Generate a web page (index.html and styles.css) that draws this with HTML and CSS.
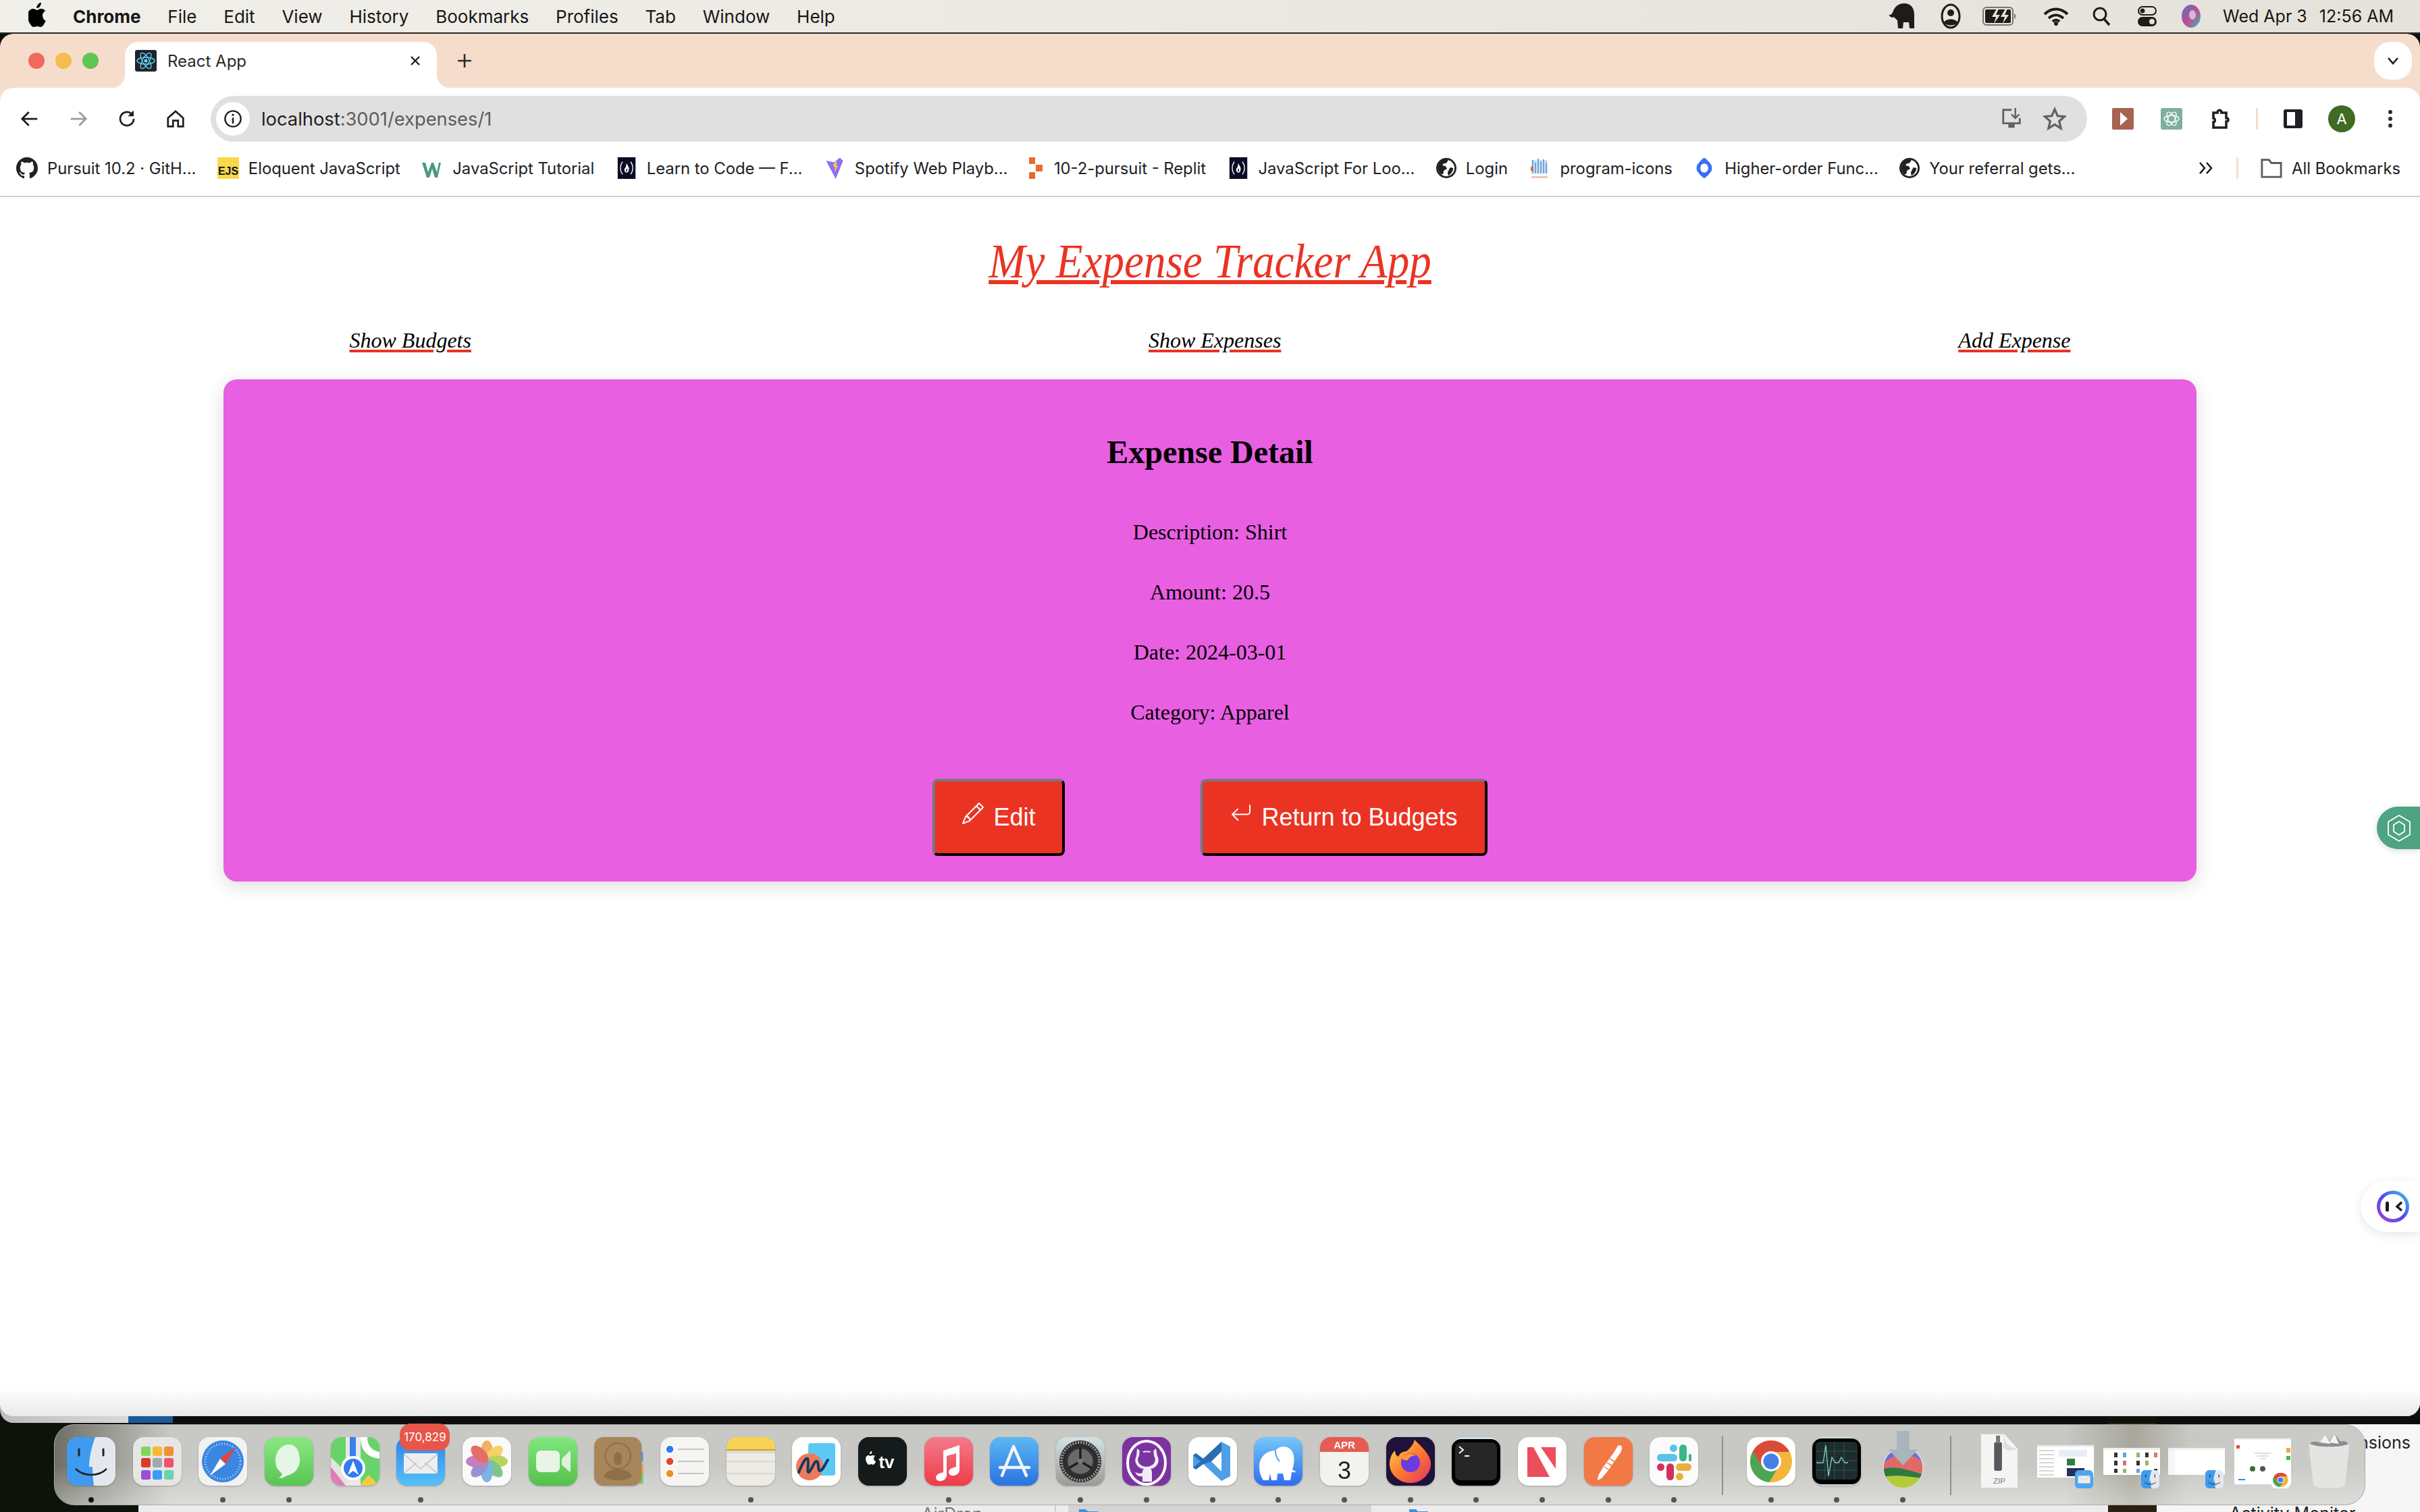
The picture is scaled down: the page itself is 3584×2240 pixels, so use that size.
FILE: index.html
```html
<!DOCTYPE html>
<html lang="en">
<head>
<meta charset="utf-8">
<title>React App</title>
<link rel="stylesheet" href="styles.css">
</head>
<body>
<svg class="defs" width="0" height="0">
  <symbol id="globe" viewBox="0 0 32 32"><circle cx="16" cy="16" r="14.5" fill="#fff" stroke="#202124" stroke-width="3"/><path d="M16 2c-7 0-13 6-13 14 0 4 2 8 5 10l3-1 1-5 5-3-2-4-5-1 1-3 5-1 3-4zM22 15l5 1c0 4-3 9-8 12l-1-5z" fill="#202124"/></symbol>
  <symbol id="fw" viewBox="0 0 32 38"><rect width="32" height="38" fill="#0b0b26"/><path d="M9 8c-5 6-5 16 0 22M23 8c5 6 5 16 0 22" fill="none" stroke="#fff" stroke-width="1.6"/><path d="M16 10c1 4 5 7 4 12 0 3-2 5-4 5s-4-2-4-5c0-3 3-4 3-7l1-5z" fill="#fff"/><path d="M16 19c1 2 2 3 1 5s-2 1-2 0 1-3 1-5z" fill="#0b0b26"/></symbol>
  <symbol id="finder" viewBox="0 0 72 72"><rect width="72" height="72" rx="16" fill="#e4e8ee"/><path d="M16 0h26c-6 16-9 32-9 44h5c0 10 1 20 2 28H16C7 72 0 65 0 56V16C0 7 7 0 16 0z" fill="#3f9bf0"/><path d="M18 18v9M54 18v9" stroke="#222" stroke-width="3" stroke-linecap="round"/><path d="M13 47c12 12 34 12 46 0" fill="none" stroke="#222" stroke-width="2.5"/></symbol>
</svg>

<div class="screen">
  <header class="menubar">
    <svg class="apple" viewBox="0 0 26 36"><path d="M21 19c0-4 3-6 4-7-2-3-5-3-6-3-3 0-5 2-6 2s-4-2-6-2c-3 0-6 2-7 5-3 6 0 14 3 18 1 2 3 4 5 4s3-1 5-1 3 1 5 1 4-2 5-4c1-2 2-4 3-5-1 0-5-3-5-8zM17 6c1-2 2-4 2-6-2 0-4 1-5 3-1 1-2 3-2 5 2 0 4-1 5-2z" fill="#000"/></svg>
    <nav class="menu">
      <span class="menu-app">Chrome</span><span>File</span><span>Edit</span><span>View</span><span>History</span><span>Bookmarks</span><span>Profiles</span><span>Tab</span><span>Window</span><span>Help</span>
    </nav>
    <div class="status">
      <svg class="st st-eleph" viewBox="0 0 42 40"><path d="M1 18c3 1 5-1 7-6 3-7 8-11 16-11 10 0 15 7 15 17v20h-7l-1-9h-8l-1 9h-7l-1-12c-3-2-4-4-5-5-2 2-5 1-8-3z" fill="#1c1c1a"/></svg>
      <svg class="st st-user" viewBox="0 0 30 38"><ellipse cx="15" cy="19" rx="13" ry="17" fill="none" stroke="#1c1c1a" stroke-width="3"/><circle cx="15" cy="14" r="5" fill="#1c1c1a"/><path d="M5 28c3-6 17-6 20 0-3 6-17 6-20 0z" fill="#1c1c1a"/></svg>
      <svg class="st st-batt" viewBox="0 0 52 30"><rect x="1" y="2" width="44" height="26" rx="5" fill="none" stroke="#77756f" stroke-width="2"/><rect x="4" y="5" width="38" height="20" rx="2" fill="#1c1c1a"/><path d="M47 11c3 1 3 7 0 8z" fill="#77756f"/><path d="M21 4l-7 12h6l-3 10 9-13h-6l4-9zM34 4l-7 12h6l-3 10 9-13h-6l4-9z" fill="#e7e4dd"/></svg>
      <svg class="st st-wifi" viewBox="0 0 38 28"><path d="M2 11c10-10 24-10 34 0M8 17c7-6 15-6 22 0M14 22c3-3 7-3 10 0" fill="none" stroke="#1c1c1a" stroke-width="4"/><circle cx="19" cy="25" r="3" fill="#1c1c1a"/></svg>
      <svg class="st st-search" viewBox="0 0 28 30"><circle cx="12" cy="12" r="9" fill="none" stroke="#1c1c1a" stroke-width="3"/><path d="M18 19l8 9" stroke="#1c1c1a" stroke-width="3.5"/></svg>
      <svg class="st st-ctrl" viewBox="0 0 28 30"><rect x="1" y="1" width="26" height="12" rx="6" fill="none" stroke="#1c1c1a" stroke-width="2"/><circle cx="7" cy="7" r="3.5" fill="#1c1c1a"/><rect y="16" width="28" height="14" rx="7" fill="#1c1c1a"/><circle cx="21" cy="23" r="4" fill="#e7e4dd"/></svg>
      <svg class="st st-siri" viewBox="0 0 30 34"><defs><linearGradient id="sr" x1="0" y1="0" x2="1" y2="1"><stop offset="0" stop-color="#4a78c8"/><stop offset=".5" stop-color="#c24a90"/><stop offset="1" stop-color="#36b8c0"/></linearGradient></defs><ellipse cx="15" cy="17" rx="14" ry="17" fill="url(#sr)"/><ellipse cx="17" cy="15" rx="5" ry="7" fill="#dfe6e8" opacity=".7"/></svg>
      <span class="clock">Wed Apr 3</span><span class="clock clock-time">12:56 AM</span>
    </div>
  </header>

  <div class="browser">
    <div class="tabstrip">
      <div class="lights"><i class="light l-red"></i><i class="light l-yellow"></i><i class="light l-green"></i></div>
      <div class="tab">
        <svg class="favicon" viewBox="0 0 32 32"><rect width="32" height="32" rx="3" fill="#20232a"/><g fill="none" stroke="#61dafb" stroke-width="1.3"><ellipse cx="16" cy="16" rx="13" ry="5"/><ellipse cx="16" cy="16" rx="13" ry="5" transform="rotate(60 16 16)"/><ellipse cx="16" cy="16" rx="13" ry="5" transform="rotate(120 16 16)"/></g><circle cx="16" cy="16" r="2.6" fill="#61dafb"/></svg>
        <span class="tab-title">React App</span>
        <svg class="tab-x" viewBox="0 0 16 16"><path d="M2 2l12 12M14 2L2 14" stroke="#1f1f1f" stroke-width="2.4"/></svg>
      </div>
      <svg class="tab-plus" viewBox="0 0 20 20"><path d="M10 1v18M1 10h18" stroke="#2b2b2b" stroke-width="2.4"/></svg>
      <div class="tab-down"><svg class="tab-chev" viewBox="0 0 18 12"><path d="M2 2l7 8 7-8" fill="none" stroke="#1f1f1f" stroke-width="2.6"/></svg></div>
    </div>

    <div class="toolbar">
      <span class="tool"><svg class="tool-svg" viewBox="0 0 24 24"><path d="M21 12H4M11 4l-8 8 8 8" fill="none" stroke="#1f1f1f" stroke-width="2.2"/></svg></span>
      <span class="tool"><svg class="tool-svg" viewBox="0 0 24 24"><path d="M3 12h17M13 4l8 8-8 8" fill="none" stroke="#9b9b9b" stroke-width="2.2"/></svg></span>
      <span class="tool"><svg class="tool-svg" viewBox="0 0 24 24"><path d="M20 12a8 8 0 1 1-2.5-5.8" fill="none" stroke="#1f1f1f" stroke-width="2.2"/><path d="M20 2v7h-7z" fill="#1f1f1f"/></svg></span>
      <span class="tool"><svg class="tool-svg" viewBox="0 0 24 24"><path d="M3 11l9-8 9 8v10h-6v-7H9v7H3z" fill="none" stroke="#1f1f1f" stroke-width="2.2"/></svg></span>
      <div class="omnibox">
        <span class="info"><svg class="info-svg" viewBox="0 0 24 24"><circle cx="12" cy="12" r="10" fill="none" stroke="#1f1f1f" stroke-width="2"/><path d="M12 10.5V18" stroke="#1f1f1f" stroke-width="2.2"/><circle cx="12" cy="7" r="1.4" fill="#1f1f1f"/></svg></span>
        <span class="url"><b class="url-host">localhost</b>:3001/expenses/1</span>
        <svg class="omni-ico" viewBox="0 0 36 36"><path d="M18 4H5v21h26v-8" fill="none" stroke="#616161" stroke-width="3"/><path d="M13 26h10v6H13z" fill="#616161"/><path d="M24 1v15M18 11l6 6 6-6" fill="none" stroke="#616161" stroke-width="2.6"/></svg>
        <svg class="omni-ico omni-star" viewBox="0 0 36 36"><path d="M18 3l4.5 10.5 11 1-8.4 7.2 2.6 11.3-9.7-6-9.7 6 2.6-11.3L2.500 14.500l11-1z" fill="none" stroke="#616161" stroke-width="3.400"/></svg>
      </div>
      <span class="tool tool-ext"><svg class="ext" viewBox="0 0 32 32"><rect width="32" height="32" rx="2" fill="#a56350"/><path d="M12 6l11 10-11 10z" fill="#fff"/></svg></span>
      <span class="tool"><svg class="ext" viewBox="0 0 32 32"><rect width="32" height="32" rx="3" fill="#7fae9e"/><g fill="none" stroke="#fff" stroke-width="1.300"><ellipse cx="16" cy="16" rx="11" ry="5"/><ellipse cx="16" cy="16" rx="11" ry="5" transform="rotate(60 16 16)"/><ellipse cx="16" cy="16" rx="11" ry="5" transform="rotate(120 16 16)"/></g></svg></span>
      <span class="tool"><svg class="ext" viewBox="0 0 32 32"><path d="M6 7h6c0-5 6-5 6 0h7v8c4 0 4 5 0 5v9H6v-8c3 0 3-6 0-6z" fill="none" stroke="#1f2024" stroke-width="3.600"/></svg></span>
      <i class="tool-sep"></i>
      <span class="tool"><svg class="ext" viewBox="0 0 32 32"><rect x="2" y="2" width="28" height="28" rx="3" fill="#1f2024"/><rect x="7" y="6" width="12" height="20" fill="#fff"/></svg></span>
      <span class="tool"><span class="avatar">A</span></span>
      <span class="tool"><svg class="ext" viewBox="0 0 32 32"><circle cx="16" cy="6" r="3" fill="#2a2b2e"/><circle cx="16" cy="16" r="3" fill="#2a2b2e"/><circle cx="16" cy="26" r="3" fill="#2a2b2e"/></svg></span>
    </div>

    <div class="bookmarks">
      <a class="bm"><svg class="bm-ico" viewBox="0 0 16 16"><path fill="#202124" d="M8 0C3.58 0 0 3.58 0 8c0 3.54 2.29 6.53 5.47 7.59.4.07.55-.17.55-.38 0-.19-.01-.82-.01-1.49-2.01.37-2.53-.49-2.69-.94-.09-.23-.48-.94-.82-1.13-.28-.15-.68-.52-.01-.53.63-.01 1.08.58 1.23.82.72 1.21 1.87.87 2.33.66.07-.52.28-.87.51-1.07-1.78-.2-3.64-.89-3.64-3.95 0-.87.31-1.59.82-2.15-.08-.2-.36-1.02.08-2.12 0 0 .67-.21 2.2.82.64-.18 1.32-.27 2-.27.68 0 1.36.09 2 .27 1.53-1.04 2.2-.82 2.2-.82.44 1.1.16 1.92.08 2.12.51.56.82 1.27.82 2.15 0 3.07-1.87 3.75-3.65 3.95.29.25.54.73.54 1.48 0 1.07-.01 1.93-.01 2.2 0 .21.15.46.55.38A8.013 8.013 0 0016 8c0-4.42-3.58-8-8-8z"/></svg>Pursuit 10.2 · GitH...</a>
      <a class="bm"><svg class="bm-ico" viewBox="0 0 32 32"><rect width="32" height="32" fill="#f7d94c"/><text class="ejs" x="16" y="26" text-anchor="middle">EJS</text></svg>Eloquent JavaScript</a>
      <a class="bm"><svg class="bm-ico" viewBox="0 0 32 32"><path d="M1 8l5 0 4 14 5-14h3l5 14 3-14 3 0-5 22h-4l-4-13-4 13H8z" fill="#4b9a7c"/></svg>JavaScript Tutorial</a>
      <a class="bm"><svg class="bm-ico" viewBox="0 0 32 38"><use href="#fw"/></svg>Learn to Code — F...</a>
      <a class="bm"><svg class="bm-ico" viewBox="0 0 32 38"><path d="M1 6l14 3L25 1l6 5-13 32z" fill="#8d6ef5"/><path d="M14 12l6-6-1 9 3 0-6 12 1-10-3 0z" fill="#f8c94a"/></svg>Spotify Web Playb...</a>
      <a class="bm"><svg class="bm-ico bm-ico-s" viewBox="0 0 20 32"><path d="M0 1a1 1 0 0 1 1-1h8v10H1a1 1 0 0 1-1-1zM10 11h9a1 1 0 0 1 1 1v8a1 1 0 0 1-1 1h-9zM0 23a1 1 0 0 1 1-1h8v10H1a1 1 0 0 1-1-1z" fill="#e56d2e"/></svg>10-2-pursuit - Replit</a>
      <a class="bm"><svg class="bm-ico" viewBox="0 0 32 38"><use href="#fw"/></svg>JavaScript For Loo...</a>
      <a class="bm"><svg class="bm-ico bm-ico-g" viewBox="0 0 32 32"><use href="#globe"/></svg>Login</a>
      <a class="bm"><svg class="bm-ico" viewBox="0 0 32 32"><rect x="4" y="4" width="24" height="20" fill="#cfe2f5"/><path d="M6 4v20M10 8v16M14 2v22M18 6v18M22 3v21M26 8v16" stroke="#6fa6dc" stroke-width="2"/><rect x="3" y="14" width="4" height="6" fill="#d76a3c"/><rect x="4" y="28" width="24" height="3" fill="#f1c6ad"/></svg>program-icons</a>
      <a class="bm"><svg class="bm-ico" viewBox="0 0 32 38"><path d="M16 1c4 2 9 8 12 12 2 3 2 9 0 12-3 4-8 10-12 12-4-2-9-8-12-12-2-3-2-9 0-12C7 9 12 3 16 1z" fill="#3a6ff2"/><ellipse cx="16" cy="19" rx="7" ry="8" fill="#fff"/></svg>Higher-order Func...</a>
      <a class="bm"><svg class="bm-ico bm-ico-g" viewBox="0 0 32 32"><use href="#globe"/></svg>Your referral gets...</a>
      <svg class="bm-more" viewBox="0 0 22 20"><path d="M2 2l7 8-7 8M12 2l7 8-7 8" fill="none" stroke="#1f1f1f" stroke-width="2.600"/></svg>
      <i class="bm-sep"></i>
      <a class="bm bm-all"><svg class="bm-ico" viewBox="0 0 34 34"><path d="M2 4h11l4 5h15v22H2z" fill="none" stroke="#5c5c5c" stroke-width="3"/></svg>All Bookmarks</a>
    </div>

    <main class="page">
      <h1 class="title">My Expense Tracker App</h1>
      <nav class="links">
        <a class="link">Show Budgets</a>
        <a class="link">Show Expenses</a>
        <a class="link">Add Expense</a>
      </nav>
      <section class="card">
        <h2 class="card-title">Expense Detail</h2>
        <p class="row">Description: Shirt</p>
        <p class="row">Amount: 20.5</p>
        <p class="row">Date: 2024-03-01</p>
        <p class="row">Category: Apparel</p>
        <div class="actions">
          <button class="btn"><svg class="btn-ico" viewBox="0 0 16 16"><path fill="#fff" d="M12.146.146a.5.5 0 0 1 .708 0l3 3a.5.5 0 0 1 0 .708l-10 10a.5.5 0 0 1-.168.11l-5 2a.5.5 0 0 1-.65-.65l2-5a.5.5 0 0 1 .11-.168l10-10zM11.207 2.500 13.500 4.793 14.793 3.500 12.500 1.207 11.207 2.500zm1.586 3L10.500 3.207 4 9.707V10h.5a.5.5 0 0 1 .5.5v.5h.5a.5.5 0 0 1 .5.5v.5h.293l6.500-6.500zm-9.761 5.175-.106.106-1.528 3.821 3.821-1.528.106-.106A.5.5 0 0 1 5 12.500V12h-.5a.5.5 0 0 1-.5-.5V11h-.5a.5.5 0 0 1-.468-.325z"/></svg>Edit</button>
          <button class="btn"><svg class="btn-ico" viewBox="0 0 16 16"><path fill="#fff" d="M14.500 1.500a.5.5 0 0 1 .5.5v4.800a2.500 2.500 0 0 1-2.500 2.500H2.707l3.347 3.346a.5.5 0 0 1-.708.708l-4.200-4.200a.5.5 0 0 1 0-.708l4-4a.5.5 0 1 1 .708.708L2.707 8.300H12.500A1.500 1.500 0 0 0 14 6.800V2a.5.5 0 0 1 .5-.5z"/></svg>Return to Budgets</button>
        </div>
      </section>
      <div class="widget-green"><svg class="widget-hex" viewBox="0 0 36 40"><path d="M18 1l16 9.500v19L18 39 2 29.500v-19z" fill="none" stroke="#fff" stroke-width="1.800"/><path d="M18 10l8 5v10l-8 5-8-5V15z" fill="none" stroke="#fff" stroke-width="1.800"/></svg></div>
      <div class="widget-white"><svg class="widget-face" viewBox="0 0 48 47"><defs><linearGradient id="fc" x1="0" y1="1" x2="1" y2="0"><stop offset="0" stop-color="#a73fd0"/><stop offset=".5" stop-color="#4b4cf0"/><stop offset="1" stop-color="#43c0e8"/></linearGradient></defs><ellipse cx="24" cy="23.500" rx="21.500" ry="21" fill="#fff" stroke="url(#fc)" stroke-width="5"/><rect x="13" y="16" width="5" height="15" rx="2.500" fill="#1b1b1f"/><path d="M37 17l-7 6.500 7 6" fill="none" stroke="#1b1b1f" stroke-width="3.500"/></svg></div>
    </main>
  </div>

  <div class="behind-left"></div>
  <div class="behind-blue"></div>
  <div class="behind-finder">
    <span class="airdrop">AirDrop</span>
    <i class="finder-divider"></i>
    <i class="finder-row"></i>
    <svg class="finder-folder finder-folder-a" viewBox="0 0 28 20"><path d="M0 2h10l3 3h15v15H0z" fill="#3f8fdc"/></svg>
    <svg class="finder-folder finder-folder-b" viewBox="0 0 28 20"><path d="M0 2h10l3 3h15v15H0z" fill="#3f8fdc"/></svg>
  </div>
  <div class="behind-paper"></div>
  <div class="behind-right"><span class="nsions">Extensions</span><span class="activity">Activity Monitor</span></div>

  <div class="dock">
    <div class="dock-item"><svg class="ico" viewBox="0 0 72 72"><use href="#finder"/></svg><i class="dot dot-k"></i></div>
    <div class="dock-item"><svg class="ico" viewBox="0 0 72 72"><rect width="72" height="72" rx="16" fill="#e6e6e4"/><rect x="12" y="14" width="14" height="14" rx="3" fill="#7ed957"/><rect x="29" y="14" width="14" height="14" rx="3" fill="#f7b733"/><rect x="46" y="14" width="14" height="14" rx="3" fill="#ef9034"/><rect x="12" y="31" width="14" height="14" rx="3" fill="#d93a2b"/><rect x="29" y="31" width="14" height="14" rx="3" fill="#a3a8ad"/><rect x="46" y="31" width="14" height="14" rx="3" fill="#f25269"/><rect x="12" y="49" width="14" height="14" rx="3" fill="#9b4fd8"/><rect x="29" y="49" width="14" height="14" rx="3" fill="#3b9cf6"/><rect x="46" y="49" width="14" height="14" rx="3" fill="#6bd2ae"/></svg></div>
    <div class="dock-item"><svg class="ico" viewBox="0 0 72 72"><rect width="72" height="72" rx="16" fill="#f2f2f2"/><circle cx="36" cy="36" r="31" fill="#3a86e0"/><circle cx="36" cy="36" r="26" fill="none" stroke="#cfe2f8" stroke-width="3" stroke-dasharray="1 3"/><path d="M55 15L32 32l8 8z" fill="#e9423a"/><path d="M17 57l15-25 8 8z" fill="#fff"/></svg><i class="dot"></i></div>
    <div class="dock-item"><svg class="ico" viewBox="0 0 72 72"><defs><linearGradient id="ms" x1="0" y1="0" x2="0" y2="1"><stop offset="0" stop-color="#8ae882"/><stop offset="1" stop-color="#58c452"/></linearGradient></defs><rect width="72" height="72" rx="16" fill="url(#ms)"/><path d="M36 11c-12 0-20 11-20 24 0 9 4 15 10 19-1 3-3 5-5 7 5 0 9-2 12-4 11-2 19-11 19-23S47 11 36 11z" fill="#e6f6e4"/></svg><i class="dot"></i></div>
    <div class="dock-item"><svg class="ico" viewBox="0 0 72 72"><defs><clipPath id="mp"><rect width="72" height="72" rx="16"/></clipPath></defs><g clip-path="url(#mp)"><rect width="72" height="72" fill="#68d36b"/><path d="M0 30L44 72H0z" fill="#e3e3e0"/><path d="M0 44L22 72H0z" fill="#e47ab8"/><path d="M42 72l14-16 16 16z" fill="#f5cb42"/><path d="M44 0c0 20 10 30 28 32V22C60 20 54 12 54 0z" fill="#fff"/><rect x="22" y="0" width="22" height="72" fill="#e8e8e6"/><rect x="28" y="0" width="9" height="44" fill="#3a7ff0"/><circle cx="33" cy="46" r="18" fill="#fff"/><circle cx="33" cy="46" r="14" fill="#2f7cf0"/><path d="M33 35l8 21-8-6-8 6z" fill="#fff"/></g></svg></div>
    <div class="dock-item"><svg class="ico" viewBox="0 0 72 72"><defs><linearGradient id="ml" x1="0" y1="0" x2="0" y2="1"><stop offset="0" stop-color="#2f80ea"/><stop offset="1" stop-color="#55c1f8"/></linearGradient></defs><rect width="72" height="72" rx="16" fill="url(#ml)"/><rect x="11" y="24" width="50" height="30" rx="2" fill="#eeeeee"/><path d="M11 25l25 22 25-22M11 54l19-16M61 54L42 38" fill="none" stroke="#bdbdbd" stroke-width="1.200"/></svg><span class="badge">170,829</span><i class="dot"></i></div>
    <div class="dock-item"><svg class="ico" viewBox="0 0 72 72"><rect width="72" height="72" rx="16" fill="#fafafa"/><g opacity=".78"><ellipse cx="36" cy="21" rx="9" ry="16" fill="#f09a3e"/><ellipse cx="36" cy="21" rx="9" ry="16" fill="#f3c73e" transform="rotate(45 36 36)"/><ellipse cx="36" cy="21" rx="9" ry="16" fill="#a9c934" transform="rotate(90 36 36)"/><ellipse cx="36" cy="21" rx="9" ry="16" fill="#5eb56c" transform="rotate(135 36 36)"/><ellipse cx="36" cy="21" rx="9" ry="16" fill="#5ba1dc" transform="rotate(180 36 36)"/><ellipse cx="36" cy="21" rx="9" ry="16" fill="#7b77c9" transform="rotate(225 36 36)"/><ellipse cx="36" cy="21" rx="9" ry="16" fill="#b85cab" transform="rotate(270 36 36)"/><ellipse cx="36" cy="21" rx="9" ry="16" fill="#e0483e" transform="rotate(315 36 36)"/></g></svg></div>
    <div class="dock-item"><svg class="ico" viewBox="0 0 72 72"><defs><linearGradient id="ft" x1="0" y1="0" x2="0" y2="1"><stop offset="0" stop-color="#80e87c"/><stop offset="1" stop-color="#56c04c"/></linearGradient></defs><rect width="72" height="72" rx="16" fill="url(#ft)"/><rect x="11" y="20" width="35" height="32" rx="7" fill="#e8f5e6"/><path d="M49 32l11-11c1-1 2 0 2 1v28c0 1-1 2-2 1L49 41z" fill="#e0f0dc"/></svg></div>
    <div class="dock-item"><svg class="ico" viewBox="0 0 72 72"><rect x="60" y="22" width="12" height="14" fill="#3e93f0"/><rect x="60" y="40" width="12" height="14" fill="#ef9a2f"/><rect x="60" y="54" width="12" height="14" fill="#6bcf5b"/><rect width="70" height="72" rx="14" fill="#a8855a"/><circle cx="35" cy="28" r="19" fill="none" stroke="#8f6f49" stroke-width="2"/><ellipse cx="35" cy="32" rx="6" ry="10" fill="#8f6f49"/><path d="M14 58c4-14 38-14 42 0-8 8-34 8-42 0z" fill="#8f6f49"/></svg></div>
    <div class="dock-item"><svg class="ico" viewBox="0 0 72 72"><rect width="72" height="72" rx="16" fill="#f6f5f2"/><circle cx="14" cy="18" r="6" fill="#2b7cf0" stroke="#fff" stroke-width="1.500"/><circle cx="14" cy="36" r="6" fill="#e8432f" stroke="#fff" stroke-width="1.500"/><circle cx="14" cy="54" r="6" fill="#ef8f2a" stroke="#fff" stroke-width="1.500"/><path d="M26 18h38M26 36h38M26 54h38" stroke="#c4c4c4" stroke-width="2"/></svg></div>
    <div class="dock-item"><svg class="ico" viewBox="0 0 72 72"><rect width="72" height="72" rx="16" fill="#eeebe4"/><path d="M0 16C0 7 7 0 16 0h40c9 0 16 7 16 16v2H0z" fill="#f8d254"/><rect y="18" width="72" height="2" fill="#c9a13a"/><rect y="20" width="72" height="4" fill="#dcd9d0"/><path d="M0 36h72M0 54h72" stroke="#d4d1c8" stroke-width="1.500"/></svg><i class="dot"></i></div>
    <div class="dock-item"><svg class="ico" viewBox="0 0 72 72"><rect width="72" height="72" rx="16" fill="#fff"/><rect x="24" y="9" width="40" height="48" rx="4" fill="#5bc9f3"/><circle cx="26" cy="44" r="20" fill="#ee7a5e"/><path d="M10 52c5-12 10-22 13-20 3 2-2 22 2 20 5-4 8-18 12-16 3 2 1 14 4 14 4 0 7-8 12-16" fill="none" stroke="#143a62" stroke-width="4" stroke-linecap="round"/></svg></div>
    <div class="dock-item"><svg class="ico" viewBox="0 0 72 72"><rect width="72" height="72" rx="16" fill="#151a1a"/><text class="ico-tv" x="42" y="46" text-anchor="middle">tv</text><path d="M16 27c-3 0-5 2-5 5 0 4 3 9 5 9s2-1 3-1 2 1 3 1c2 0 4-4 4-5-2-1-3-2-3-4s1-3 2-4c-1-1-3-1-4-1s-2 1-3 1-2-1-2-1zM19 25c1-1 2-3 1-4-2 0-3 2-3 4z" fill="#fff"/></svg></div>
    <div class="dock-item"><svg class="ico" viewBox="0 0 72 72"><defs><linearGradient id="mu" x1="0" y1="0" x2="0" y2="1"><stop offset="0" stop-color="#f37b8c"/><stop offset="1" stop-color="#ee3c46"/></linearGradient></defs><rect width="72" height="72" rx="16" fill="url(#mu)"/><path d="M28 20l24-8v36c0 5-3 8-8 9s-8-2-8-5 3-6 8-7l3-1V24l-14 4v28c0 5-3 8-8 9s-8-2-8-5 3-6 8-7l3-1z" fill="#fff"/></svg><i class="dot"></i></div>
    <div class="dock-item"><svg class="ico" viewBox="0 0 72 72"><defs><linearGradient id="as" x1="0" y1="0" x2="0" y2="1"><stop offset="0" stop-color="#5cb8f3"/><stop offset="1" stop-color="#2a72e0"/></linearGradient></defs><rect width="72" height="72" rx="16" fill="url(#as)"/><path d="M35 14L18 57M35 14l19 43M15 45h43" fill="none" stroke="#f2f6fa" stroke-width="4.500" stroke-linecap="round"/></svg></div>
    <div class="dock-item"><svg class="ico" viewBox="0 0 72 72"><defs><linearGradient id="st" x1="0" y1="0" x2="0" y2="1"><stop offset="0" stop-color="#d4e2e6"/><stop offset="1" stop-color="#9a9a96"/></linearGradient></defs><rect width="72" height="72" rx="16" fill="url(#st)"/><circle cx="36" cy="36" r="31" fill="#2c2c2c"/><circle cx="36" cy="36" r="28" fill="none" stroke="#9a9a9a" stroke-width="4" stroke-dasharray="2 2"/><circle cx="36" cy="36" r="20" fill="#6a6a6a" stroke="#333" stroke-width="3"/><path d="M36 36V16M36 36l17 10M36 36L19 46" stroke="#1f1f1f" stroke-width="3.500"/><circle cx="36" cy="36" r="4" fill="#777"/></svg><i class="dot"></i></div>
    <div class="dock-item"><svg class="ico" viewBox="0 0 72 72"><rect width="72" height="72" rx="16" fill="#7b33a0"/><ellipse cx="36" cy="38" rx="28" ry="32" fill="none" stroke="#fff" stroke-width="4"/><path d="M22 17l6 5c5-2 11-2 16 0l6-5 2 11c3 5 2 12-3 16-2 2-5 3-7 3 2 2 2 4 2 7v12H30V58c-6 1-9-2-11-6 3 1 6 3 11 1 0-2 0-4 2-6-3 0-6-1-8-3-5-4-6-11-3-16z" fill="#fff" opacity=".9"/><path d="M26 18l6 5c3-1 6-1 9 0l5-5 1 10c3 4 2 10-2 13-3 2-6 3-9 3s-7-1-9-3c-4-3-5-9-2-13z" fill="#7b33a0"/></svg><i class="dot"></i></div>
    <div class="dock-item"><svg class="ico" viewBox="0 0 72 72"><rect width="72" height="72" rx="16" fill="#fff"/><path d="M49 7l13 7v44l-13 7-27-25-11 8-4-3V27l4-3 11 8zM49 21L34 36l15 15z" fill="#4f9fe6"/><path d="M22 32L11 24l-4 3 11 9-11 9 4 3 11-8 12-4zM49 7l-27 25 12 4 15-15z" fill="#2a6db3"/></svg><i class="dot"></i></div>
    <div class="dock-item"><svg class="ico" viewBox="0 0 72 72"><defs><linearGradient id="tp" x1="0" y1="0" x2="0" y2="1"><stop offset="0" stop-color="#74c8f8"/><stop offset="1" stop-color="#2e6cf0"/></linearGradient></defs><rect width="72" height="72" rx="16" fill="url(#tp)"/><path d="M8 44c0-14 10-24 24-24 6-8 18-8 24 0 5 7 4 20 1 28l6 4-7 0-2 12h-9l-2-10h-8l-1 10h-8l-2-10-2 10H14c-4-6-6-12-6-20z" fill="#fff"/><path d="M32 20c0 6 2 12 6 16" fill="none" stroke="#5a9ff0" stroke-width="2"/></svg><i class="dot"></i></div>
    <div class="dock-item"><svg class="ico" viewBox="0 0 72 72"><rect width="72" height="72" rx="16" fill="#f3f2ee"/><path d="M0 22V16C0 7 7 0 16 0h40c9 0 16 7 16 16v6z" fill="#e35d52"/><text class="cal-m" x="36" y="17" text-anchor="middle">APR</text><text class="cal-d" x="36" y="62" text-anchor="middle">3</text></svg><i class="dot"></i></div>
    <div class="dock-item"><svg class="ico" viewBox="0 0 72 72"><defs><linearGradient id="ff" x1="0" y1="0" x2="1" y2="1"><stop offset="0" stop-color="#ffd84a"/><stop offset=".5" stop-color="#ff7a2e"/><stop offset="1" stop-color="#e0306a"/></linearGradient></defs><rect width="72" height="72" rx="16" fill="#20123a"/><path d="M42 4c10 10 26 24 24 38-2 14-14 26-30 26S5 56 5 40c0-8 3-16 8-20 0 6 3 8 5 9 2-6 8-8 12-8 6-5 10-10 12-17z" fill="url(#ff)"/><circle cx="36" cy="38" r="14" fill="#6a3ce0"/><path d="M23 32c4-8 15-10 21-4-6-1-10 2-12 6-3 1-6 0-9-2z" fill="#ff9a2e"/></svg><i class="dot"></i></div>
    <div class="dock-item"><svg class="ico" viewBox="0 0 72 72"><rect width="72" height="72" rx="16" fill="#cfe3e8"/><rect y="3" width="72" height="69" rx="14" fill="#000"/><rect x="5" y="8" width="62" height="56" rx="8" fill="#262626"/><path d="M11 14l6 5-6 5" fill="none" stroke="#fff" stroke-width="1.800"/><path d="M19 28h7" stroke="#fff" stroke-width="2"/></svg><i class="dot"></i></div>
    <div class="dock-item"><svg class="ico" viewBox="0 0 72 72"><rect width="72" height="72" rx="16" fill="#fff"/><path d="M14 15h42v44H14z" fill="#ec4e5d"/><path d="M23 15h11l22 32v12h-9z" fill="#fff"/></svg><i class="dot"></i></div>
    <div class="dock-item"><svg class="ico" viewBox="0 0 72 72"><rect width="72" height="72" rx="16" fill="#f27846"/><path d="M50 13c4-3 7 1 6 5l-2 5-18 26-10 12-6 3 1-7 7-12 16-22zM22 58l8-12" fill="#fff"/><path d="M38 32l8 5M34 38l8 5M30 44l7 5" stroke="#f27846" stroke-width="1.500"/></svg><i class="dot"></i></div>
    <div class="dock-item"><svg class="ico" viewBox="0 0 72 72"><rect width="72" height="72" rx="16" fill="#fbfbfb"/><rect x="30" y="11" width="11" height="11" rx="5.500" fill="#5cc3e8"/><rect x="11" y="25" width="30" height="11" rx="5.500" fill="#5cc3e8"/><rect x="44" y="11" width="11" height="25" rx="5.500" fill="#3eb48a"/><rect x="58" y="25" width="4" height="11" rx="2" fill="#3eb48a"/><rect x="11" y="39" width="11" height="11" rx="5.500" fill="#d0305f"/><rect x="25" y="39" width="11" height="25" rx="5.500" fill="#d0305f"/><rect x="39" y="39" width="23" height="11" rx="5.500" fill="#e7b140"/><rect x="39" y="53" width="11" height="11" rx="5.500" fill="#e7b140"/></svg><i class="dot"></i></div>
    <div class="dock-sep dock-sep-a"></div>
    <div class="dock-item"><svg class="ico" viewBox="0 0 72 72"><rect width="72" height="72" rx="16" fill="#fff"/><circle cx="36" cy="36" r="31" fill="#f3b63b"/><path d="M36 5A31 31 0 0 0 9 21l14 24L36 22h27A31 31 0 0 0 36 5z" fill="#d94b3a"/><path d="M9 21a31 31 0 0 0 24 46l13-21-23-1z" fill="#4ba554"/><circle cx="36" cy="36" r="15" fill="#fff"/><circle cx="36" cy="36" r="11.500" fill="#4580e8"/></svg><i class="dot"></i></div>
    <div class="dock-item"><svg class="ico" viewBox="0 0 72 72"><rect width="72" height="72" rx="16" fill="#cfe3e8"/><rect y="2" width="72" height="68" rx="14" fill="#000"/><rect x="5" y="7" width="62" height="56" rx="6" fill="#1d2c2c"/><path d="M5 21h62M5 35h62M5 49h62M19 7v56M33 7v56M47 7v56" stroke="#375050" stroke-width="1"/><path d="M6 38h10l4-26 4 46 5-28 5 8 5 0 4-8 5 8 5 0" fill="none" stroke="#7fd2c0" stroke-width="1.300"/></svg><i class="dot"></i></div>
    <div class="dock-item"><svg class="ico-sonoma" viewBox="0 0 72 88" preserveAspectRatio="none"><defs><clipPath id="so"><ellipse cx="36" cy="56" rx="35" ry="32"/></clipPath></defs><g clip-path="url(#so)"><rect y="20" width="72" height="70" fill="#6d6be0"/><path d="M0 50c20-14 40-24 72-2v40H0z" fill="#e06a6a"/><path d="M0 58c20-6 40 0 72 8v22H0z" fill="#2f7a3f"/><path d="M0 70c20-4 40-2 72 2v18H0z" fill="#b2cc3a"/></g><ellipse cx="36" cy="56" rx="35" ry="31" fill="none" stroke="#d8d8de" stroke-width="2"/><path d="M25 0h22v28h15L36 52 10 28h15z" fill="#a9b5ba"/></svg><i class="dot"></i></div>
    <div class="dock-sep dock-sep-b"></div>
    <div class="dock-item"><svg class="ico-zip" viewBox="0 0 56 88" preserveAspectRatio="none"><path d="M0 4h36l20 22v60H0z" fill="#f4f4f4"/><path d="M36 4c0 12 4 20 20 22-6 4-18 4-22-2z" fill="#dedede"/><rect x="20" y="16" width="12" height="44" rx="3" fill="#55585c"/><rect x="23" y="6" width="6" height="12" fill="#777"/><text class="zip-t" x="28" y="80" text-anchor="middle">ZIP</text></svg></div>
    <div class="thumb thumb-a"><svg class="thumb-svg" viewBox="0 0 84 48"><rect width="84" height="48" fill="#fff"/><rect width="84" height="3" fill="#eee"/><path d="M3 8h22M3 14h22M3 20h22M3 26h22M3 32h22M3 38h22M3 44h22" stroke="#ccc" stroke-width="1.500"/><rect x="32" y="7" width="42" height="10" fill="#e9eef6"/><rect x="44" y="20" width="12" height="10" fill="#2e7d46"/><rect x="44" y="34" width="26" height="12" fill="#24315c"/></svg><svg class="thumb-badge" viewBox="0 0 72 72"><rect width="72" height="72" rx="16" fill="#4aa6f2"/><rect x="12" y="22" width="48" height="30" fill="#eee"/><path d="M12 23l24 18 24-18" fill="none" stroke="#bbb" stroke-width="1.500"/></svg></div>
    <div class="thumb thumb-b"><svg class="thumb-svg" viewBox="0 0 84 40"><rect width="84" height="40" fill="#fff"/><rect width="84" height="3" fill="#eee"/><g fill="#333"><rect x="16" y="7" width="5" height="7"/><rect x="62" y="7" width="5" height="7"/><rect x="16" y="19" width="5" height="7"/><rect x="49" y="19" width="5" height="7"/><rect x="16" y="31" width="5" height="6"/><rect x="75" y="31" width="5" height="6"/></g><g fill="#5ba8e8"><rect x="29" y="7" width="5" height="7"/><rect x="49" y="31" width="5" height="6"/></g><g fill="#e07070"><rect x="29" y="19" width="5" height="7"/><rect x="75" y="7" width="5" height="7"/></g><g fill="#8fb86a"><rect x="49" y="7" width="5" height="7"/><rect x="62" y="19" width="5" height="7"/><rect x="29" y="31" width="5" height="6"/></g></svg><svg class="thumb-badge" viewBox="0 0 72 72" preserveAspectRatio="none"><use href="#finder" width="72" height="72"/></svg></div>
    <div class="thumb thumb-c"><svg class="thumb-svg" viewBox="0 0 84 40"><rect width="84" height="40" fill="#fff"/><rect width="84" height="3" fill="#eee"/><path d="M0 3h10v37H0z" fill="#f5f5f5"/></svg><svg class="thumb-badge" viewBox="0 0 72 72" preserveAspectRatio="none"><use href="#finder" width="72" height="72"/></svg></div>
    <div class="thumb thumb-d"><svg class="thumb-svg" viewBox="0 0 84 68"><rect width="84" height="68" fill="#fff"/><rect width="84" height="2" fill="#eee"/><rect x="3" y="10" width="5" height="5" fill="#e8473a"/><rect x="77" y="14" width="6" height="7" fill="#f4a83a"/><rect x="77" y="26" width="6" height="6" fill="#4fb54f"/><circle cx="27" cy="45" r="4" fill="#3c6e2f"/><circle cx="42" cy="45" r="4" fill="#555"/><path d="M30 22h24M34 26h16M38 30h8" stroke="#bbb" stroke-width="1"/><rect x="6" y="60" width="10" height="2" fill="#3a7ff0"/></svg><svg class="thumb-badge thumb-badge-d" viewBox="0 0 72 72" preserveAspectRatio="none"><rect width="72" height="72" rx="16" fill="#fff"/><circle cx="36" cy="36" r="30" fill="#f3b63b"/><path d="M36 6A30 30 0 0 0 10 21l13 24L36 21h27A30 30 0 0 0 36 6z" fill="#d94b3a"/><path d="M10 21a30 30 0 0 0 23 45l13-21-23-1z" fill="#4ba554"/><circle cx="36" cy="36" r="14" fill="#fff"/><circle cx="36" cy="36" r="11" fill="#4580e8"/></svg></div>
    <div class="dock-item dock-trash"><svg class="ico-trash" viewBox="0 0 64 88" preserveAspectRatio="none"><path d="M2 18h60l-6 62c-1 6-5 8-24 8s-23-2-24-8z" fill="#e4e4e2" stroke="#cfcfcd"/><path d="M4 18c8 6 48 6 56 0-4-6-8-4-12-4L40 2l-8 12-6-10-8 12c-6-2-12-2-14 2z" fill="#8d8e92"/><path d="M26 4l-8 12 16 2zM40 2l-8 14 14 2z" fill="#f2f2f2"/></svg></div>
  </div>
</div>
</body>
</html>
```

FILE: styles.css
```css
* { box-sizing: border-box; }
html, body { margin: 0; padding: 0; background: #0d120b; }
.defs { position: absolute; }

.screen {
  position: relative;
  width: 3584px;
  height: 2240px;
  overflow: hidden;
  display: flex;
  flex-direction: column;
  background: #0d120b;
  font-family: Inter, "Liberation Sans", sans-serif;
}

/* macOS menu bar */
.menubar {
  flex: none;
  height: 48px;
  display: flex;
  align-items: center;
  padding: 0 39px 0 42px;
  background: linear-gradient(90deg, #f1efe9, #e5e2db);
  color: #161616;
  font-size: 26px;
  box-shadow: 0 2px 0 #2a2a2a;
}
.apple { width: 26px; height: 36px; margin-top: -4px; }
.menu { display: flex; margin-left: 40px; gap: 39.8px; }
.menu-app { font-weight: 700; }
.status { margin-left: auto; display: flex; align-items: center; font-size: 25px; }
.st { display: block; flex: none; }
.st-eleph { width: 42px; height: 40px; }
.st-user { width: 30px; height: 38px; margin-left: 36px; }
.st-batt { width: 52px; height: 30px; margin-left: 32px; }
.st-wifi { width: 38px; height: 28px; margin-left: 38px; }
.st-search { width: 28px; height: 30px; margin-left: 34px; }
.st-ctrl { width: 28px; height: 30px; margin-left: 40px; }
.st-siri { width: 30px; height: 34px; margin-left: 36px; }
.clock { margin-left: 32px; white-space: nowrap; }
.clock-time { margin-left: 18px; }

/* browser window */
.browser {
  position: relative;
  z-index: 3;
  flex: none;
  height: 2048px;
  margin-top: 2px;
  display: flex;
  flex-direction: column;
  background: #f6dccb;
  border-radius: 20px;
  overflow: hidden;
}
.tabstrip {
  flex: none;
  height: 80px;
  display: flex;
  align-items: flex-end;
  position: relative;
}
.lights { display: flex; gap: 16px; padding: 0 0 28px 42px; }
.light { display: block; width: 24px; height: 24px; border-radius: 50%; }
.l-red { background: #ee6a5f; }
.l-yellow { background: #f5bd4f; }
.l-green { background: #61c554; }
.tab {
  position: relative;
  width: 462px;
  height: 68px;
  margin-left: 39px;
  display: flex;
  align-items: center;
  padding: 0 24px 12px 15px;
  background: #fff;
  border-radius: 20px 20px 0 0;
  font-size: 24px;
  color: #2a2a2a;
}
.tab::before, .tab::after {
  content: "";
  position: absolute;
  bottom: 0;
  width: 20px;
  height: 20px;
}
.tab::before { left: -20px; background: radial-gradient(circle at 0 0, transparent 20px, #fff 20.5px); }
.tab::after { right: -20px; background: radial-gradient(circle at 100% 0, transparent 20px, #fff 20.5px); }
.favicon { width: 32px; height: 32px; flex: none; }
.tab-title { margin-left: 16px; }
.tab-x { width: 16px; height: 16px; margin-left: auto; }
.tab-plus { width: 22px; height: 22px; margin: 0 0 29px 30px; }
.tab-down {
  position: absolute;
  right: 12px;
  top: 12px;
  width: 56px;
  height: 56px;
  background: #fff;
  border-radius: 24px;
  display: flex;
  align-items: center;
  justify-content: center;
}
.tab-chev { width: 18px; height: 12px; }

.toolbar {
  flex: none;
  height: 80px;
  display: flex;
  align-items: center;
  padding: 12px 8px 0;
  background: #fff;
  border-radius: 20px 20px 0 0;
}
.tool { width: 72px; flex: none; display: flex; align-items: center; justify-content: center; }
.tool-svg { width: 30px; height: 30px; }
.omnibox {
  flex: 1;
  height: 68px;
  margin: 0 17px 0 16px;
  display: flex;
  align-items: center;
  padding: 0 20px 0 8px;
  background: #e0e0e0;
  border-radius: 34px;
}
.info { width: 50px; height: 50px; background: #fff; border-radius: 50%; display: flex; align-items: center; justify-content: center; flex: none; }
.info-svg { width: 28px; height: 28px; }
.url { margin-left: 17px; font-size: 27.3px; color: #5c5c5c; }
.url-host { font-weight: 400; color: #1f1f1f; }
.omni-ico { width: 34px; height: 36px; margin-left: auto; }
.omni-star { margin-left: 30px; margin-right: 11px; }
.ext { width: 32px; height: 32px; display: block; }
.tool-sep { width: 36px; flex: none; height: 32px; background: linear-gradient(#f6dccb, #f6dccb) center / 3px 100% no-repeat; }
.avatar {
  width: 40px;
  height: 40px;
  border-radius: 50%;
  background: #3f6b24;
  color: #fff;
  font-size: 22px;
  display: flex;
  align-items: center;
  justify-content: center;
}

.bookmarks {
  flex: none;
  height: 82px;
  display: flex;
  align-items: center;
  gap: 31.5px;
  padding: 0 29px 2px 24px;
  background: #fff;
  border-bottom: 2px solid #cfcfcf;
  font-size: 23.8px;
  color: #202124;
  white-space: nowrap;
}
.bm { display: flex; align-items: center; gap: 14px; flex: none; }
.bm-ico { width: 32px; height: 32px; flex: none; }
.bm-ico-s { width: 20px; margin-right: 3px; }
.bm-ico-g { width: 30px; height: 30px; }
.ejs { font: 700 16px "Liberation Sans", sans-serif; fill: #111; }
.bm-more { width: 22px; height: 20px; margin-left: auto; }
.bm-sep { width: 3px; height: 32px; background: #f6dccb; margin: 0 2px; }

/* the page in the browser */
.page {
  position: relative;
  flex: 1;
  padding: 0 16px;
  background: linear-gradient(#fff 1765px, #e9e9e9 100%);
  font-family: "Liberation Serif", serif;
  display: flex;
  flex-direction: column;
}
.title {
  margin: 47px 0 1px;
  height: 96px;
  line-height: 96px;
  text-align: center;
  font-size: 72px;
  font-weight: 400;
  font-style: italic;
  color: #eb3323;
  text-decoration: underline 6px;
  text-underline-offset: 4px;
  transform: scaleX(.905);
}
.links {
  margin-top: 48px;
  display: flex;
  justify-content: space-around;
  font-size: 32px;
  font-style: italic;
  line-height: 40px;
}
.link {
  color: #000;
  text-decoration: underline 4px #eb3323;
  text-underline-offset: 3px;
}
.card {
  width: 2922px;
  height: 744px;
  margin: 38px auto 0;
  padding: 80px 0 0;
  background: #e85fe2;
  border-radius: 20px;
  box-shadow: 0 6px 28px rgba(0, 0, 0, .14);
  text-align: center;
  color: #000;
  flex: none;
}
.card-title { margin: 0 0 72px; font-size: 48px; line-height: 56px; font-weight: 700; }
.row { margin: 0 0 52px; font-size: 32px; line-height: 37px; }
.actions {
  margin-top: 80px;
  display: flex;
  justify-content: center;
  gap: 201px;
}
.btn {
  height: 114px;
  padding: 0 40px;
  display: flex;
  align-items: center;
  gap: 14px;
  border: 4px outset #767676;
  border-color: #767676 #1f1f1f #1f1f1f #767676;
  border-radius: 8px;
  background: #eb3323;
  color: #fff;
  font: 36px "Liberation Sans", sans-serif;
}
.btn-ico { width: 32px; height: 32px; margin-top: -12px; }

.widget-green {
  position: absolute;
  right: 0;
  top: 903px;
  width: 64px;
  height: 63px;
  padding-left: 15px;
  display: flex;
  align-items: center;
  background: #4ea383;
  border-radius: 32px 0 0 32px;
  box-shadow: 0 2px 10px rgba(0, 0, 0, .15);
}
.widget-hex { width: 36px; height: 40px; }
.widget-white {
  position: absolute;
  right: 0;
  top: 1457px;
  width: 88px;
  height: 76px;
  padding-left: 24px;
  display: flex;
  align-items: center;
  background: #fff;
  border-radius: 38px 0 0 38px;
  box-shadow: 0 4px 16px rgba(0, 0, 0, .1);
}
.widget-face { width: 48px; height: 47px; }

/* what shows behind the window and the dock: a free desktop */
.behind-left {
  position: absolute;
  left: 0;
  top: 2080px;
  width: 190px;
  height: 28px;
  background: linear-gradient(90deg, #bdbdbd, #d8d8d8);
  border-radius: 0 0 0 20px;
  z-index: 1;
}
.behind-blue {
  position: absolute;
  left: 190px;
  top: 2090px;
  width: 66px;
  height: 18px;
  background: #1c5a9e;
  z-index: 2;
}
.behind-finder {
  position: absolute;
  left: 205px;
  top: 2098px;
  width: 2917px;
  height: 142px;
  background: linear-gradient(#0d0d0d 12px, #ececec 12px);
  z-index: 1;
}
.airdrop {
  position: absolute;
  left: 1160px;
  top: 130px;
  font: 25px Inter, sans-serif;
  color: #777;
}
.finder-divider { position: absolute; left: 1357px; top: 12px; bottom: 0; width: 2px; background: #cfcfcf; }
.finder-row { position: absolute; left: 1377px; top: 120px; width: 449px; height: 22px; background: #d4d4d4; }
.finder-folder { position: absolute; top: 136px; width: 28px; height: 20px; }
.finder-folder-a { left: 1393px; }
.finder-folder-b { left: 1882px; }
.behind-paper {
  position: absolute;
  left: 3122px;
  top: 2108px;
  width: 72px;
  height: 132px;
  background: #2a2112;
  z-index: 1;
}
.behind-right {
  position: absolute;
  left: 3194px;
  top: 2098px;
  width: 390px;
  height: 142px;
  background: linear-gradient(#0d0d0d 12px, #f6f6f6 12px);
  z-index: 1;
}
.nsions { position: absolute; right: 14px; top: 24px; font: 25px Inter, sans-serif; color: #222; }
.activity { position: absolute; left: 108px; top: 129px; font: 25px Inter, sans-serif; color: #222; }

/* dock */
.dock {
  position: absolute;
  z-index: 4;
  left: 80px;
  top: 2110px;
  width: 3423px;
  height: 120px;
  display: flex;
  padding-left: 5px;
  background: linear-gradient(90deg, #6f6f66 0, #c8c8c4 5%, #c8c8c4 87%, #a8a79c 90%, #c8c8c4 92.4%, #cbcbc8 100%);
  border-radius: 30px;
  border: 1px solid #ababab;
}
.dock::after {
  content: "";
  position: absolute;
  inset: 60px 0 0 0;
  border-radius: 0 0 30px 30px;
  background: linear-gradient(rgba(255, 255, 255, 0), rgba(255, 255, 255, .35));
  pointer-events: none;
}
.dock-item {
  position: relative;
  z-index: 1;
  flex: none;
  width: 97.7px;
  height: 118px;
  padding-top: 18px;
  display: flex;
  flex-direction: column;
  align-items: center;
}
.ico { width: 72px; height: 72px; display: block; flex: none; filter: drop-shadow(0 1px 1px rgba(0, 0, 0, .25)); }
.ico-sonoma { width: 61px; height: 86px; margin-top: -9px; flex: none; }
.ico-zip { width: 54px; height: 85px; margin-top: -8px; flex: none; }
.ico-trash { width: 65px; height: 83px; margin-top: -7px; flex: none; }
.dot {
  position: absolute;
  left: calc(50% - 4px);
  top: 107px;
  width: 8px;
  height: 8px;
  border-radius: 50%;
  background: #555;
}
.dot-k { background: #111; }
.badge {
  position: absolute;
  left: 18px;
  top: -2px;
  width: 74px;
  height: 40px;
  border-radius: 16px;
  background: #e8564a;
  color: #fff;
  font-size: 17px;
  display: flex;
  align-items: center;
  justify-content: center;
}
.ico-tv { font: 700 26px "Liberation Sans", sans-serif; fill: #fff; }
.cal-m { font: 700 15px "Liberation Sans", sans-serif; fill: #fff; }
.cal-d { font: 36px "Liberation Sans", sans-serif; fill: #222; }
.zip-t { font: 12px "Liberation Sans", sans-serif; fill: #777; }
.dock-sep {
  position: relative;
  z-index: 1;
  flex: none;
  height: 88px;
  margin-top: 16px;
  background: linear-gradient(#8f8f8f, #8f8f8f) center / 2px 100% no-repeat;
}
.dock-sep-a { width: 45.6px; }
.dock-sep-b { width: 45px; }
.thumb { position: relative; z-index: 1; flex: none; width: 97px; height: 118px; }
.thumb-svg { position: absolute; display: block; width: 84px; }
.thumb-badge { position: absolute; top: 67px; width: 27px; height: 27px; }
.thumb-a .thumb-svg { left: 7px; top: 30px; height: 48px; }
.thumb-a .thumb-badge { left: 63px; }
.thumb-b .thumb-svg { left: 8px; top: 34px; height: 40px; }
.thumb-b .thumb-badge { left: 64px; }
.thumb-c .thumb-svg { left: 7px; top: 34px; height: 40px; }
.thumb-c .thumb-badge { left: 62px; }
.thumb-d .thumb-svg { left: 8px; top: 20px; height: 68px; }
.thumb-d .thumb-badge { left: 63px; top: 69px; height: 25px; }
.dock-trash { margin-left: 3px; }
```
